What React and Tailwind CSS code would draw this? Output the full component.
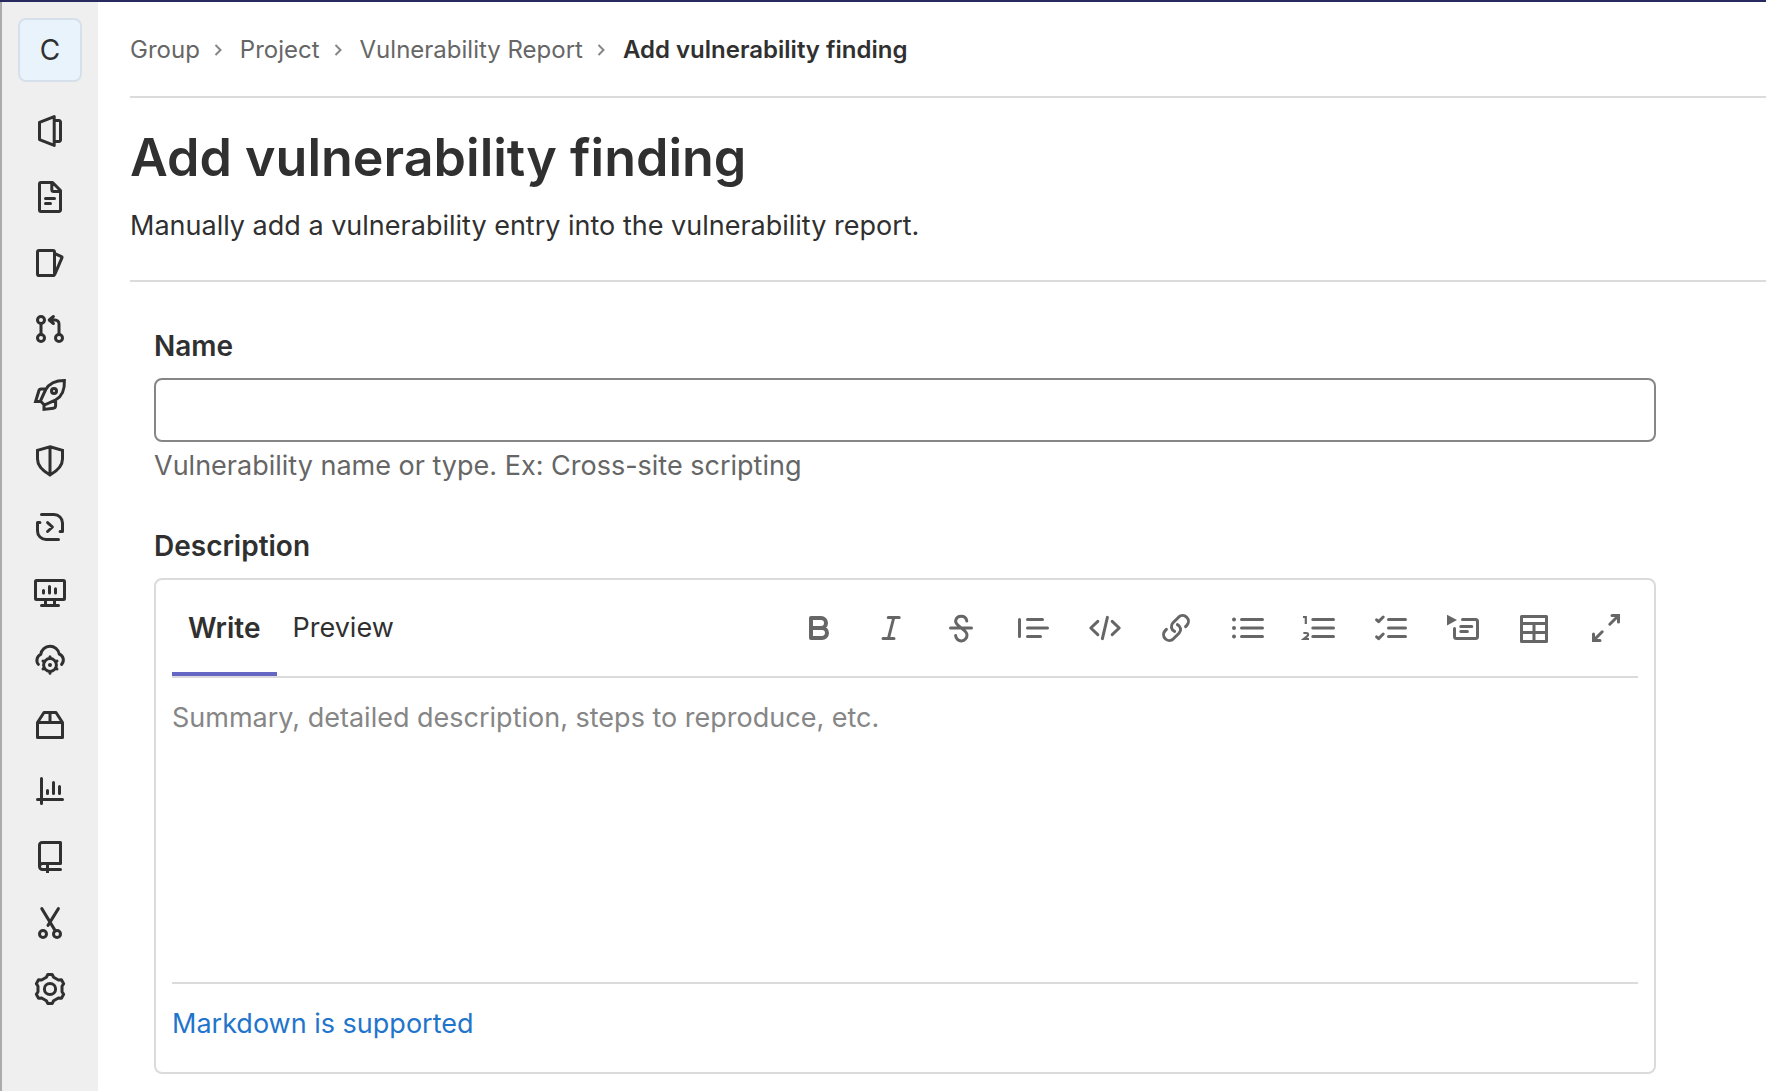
import React from "react";

function Icon({ children, viewBox = "0 0 16 16", strokeWidth = 1.5 }) {
  return (
    <svg
      viewBox={viewBox}
      className="size-8 shrink-0 overflow-visible"
      fill="none"
      stroke="currentColor"
      strokeWidth={strokeWidth}
      strokeLinecap="round"
      strokeLinejoin="round"
      aria-hidden="true"
    >
      {children}
    </svg>
  );
}

const navItems = [
  {
    label: "Project information",
    icon: (
      <Icon>
        <path d="M2.75 3.7 10.1.8v14.4l-7.35-2.9zM10.5 2.75h2a.75.75 0 0 1 .75.75v9a.75.75 0 0 1-.75.75h-2" />
      </Icon>
    ),
  },
  {
    label: "Repository",
    icon: (
      <Icon>
        <path d="M2.75 1.5a.75.75 0 0 1 .75-.75h5.8l3.95 4v9.75a.75.75 0 0 1-.75.75h-9a.75.75 0 0 1-.75-.75zM8.9 1v3.25a1 1 0 0 0 1 1h3.2M5.75 8.75h4.5M5.75 11.25h2.5" />
      </Icon>
    ),
  },
  {
    label: "Issues",
    icon: (
      <Icon>
        <rect x="1.75" y="1.75" width="8.5" height="12.5" rx=".8" />
        <path d="m10.5 3.3 3.2 1.5a.5.5 0 0 1 .25.65L10.5 13.4" />
      </Icon>
    ),
  },
  {
    label: "Merge requests",
    icon: (
      <Icon>
        <circle cx="3.5" cy="3.5" r="1.75" />
        <circle cx="3.5" cy="12.5" r="1.75" />
        <circle cx="12.5" cy="12.5" r="1.75" />
        <path d="M3.5 5.25v5.5M12.5 10.75V5.5a2 2 0 0 0-2-2H8.2M9.7 1.75 7.6 3.5l2.1 1.75" />
      </Icon>
    ),
  },
  {
    label: "CI/CD",
    icon: (
      <Icon>
        <path
          strokeLinejoin="miter"
          strokeLinecap="butt"
          d="M15.2.8C10.6.8 7.5 2.4 5.8 5.4L3.2 11l2 2 5.7-2.6c3-1.7 4.5-5 4.3-9.6zM6 5H3.6a1.3 1.3 0 0 0-1.2 1L.8 11.3h2.6M5 12.7v2.5l4.7-.6a1.3 1.3 0 0 0 1.1-1.1v-3"
        />
        <circle cx="10" cy="6" r="1.25" />
      </Icon>
    ),
  },
  {
    label: "Security & Compliance",
    icon: (
      <Icon>
        <path
          strokeLinejoin="miter"
          d="M8 .85 14.25 2.7V7c0 3.3-2.7 6-6.25 8C4.45 13 1.75 10.3 1.75 7V2.7zM8 1v14"
        />
      </Icon>
    ),
  },
  {
    label: "Deployments",
    icon: (
      <Icon>
        <path d="M3.75 1.75H10A4.25 4.25 0 0 1 14.25 6v4.25h-1.2M12.25 14.25H6A4.25 4.25 0 0 1 1.75 10V5.75h1.2M6.8 5.8 9.2 8l-2.4 2.25" />
      </Icon>
    ),
  },
  {
    label: "Monitor",
    icon: (
      <Icon>
        <rect x=".75" y="1.75" width="14.5" height="9.5" rx=".5" />
        <path d="M5.75 11.5V14M10.25 11.5V14M3.75 14.2h8.5M4.75 6.8V8M7.75 4.8V8M10.75 5.9V8" />
      </Icon>
    ),
  },
  {
    label: "Infrastructure",
    icon: (
      <Icon>
        <path d="M2.2 10.7a3.2 3.2 0 0 1 1.2-5 4.65 4.65 0 0 1 9.2-.2 3.2 3.2 0 0 1 1.2 5.2" />
        <circle cx="8" cy="11" r="3.2" />
        <path d="M8 7.8v-.9M8 15.1v-.9M10.8 9.4l.7-.4M4.5 13l.7-.4M10.8 12.6l.7.4M4.5 9l.7.4" />
        <circle cx="8" cy="11" r="1" fill="currentColor" stroke="none" />
      </Icon>
    ),
  },
  {
    label: "Packages and registries",
    icon: (
      <Icon>
        <path d="M1.75 6.75h12.5v7.5H1.75zM1.75 6.75l3.25-5h6l3.25 5M8 1.75v5" />
      </Icon>
    ),
  },
  {
    label: "Analytics",
    icon: (
      <Icon>
        <path d="M3.75 1.75v12.5M1.75 12.25h12.5M6.75 7.75v1.5M9.75 3.75v5.5M12.75 5.75v3.5" />
      </Icon>
    ),
  },
  {
    label: "Wiki",
    icon: (
      <Icon>
        <path d="M13.25 11.25V.75H4A1.25 1.25 0 0 0 2.75 2v10.5M13.25 11.25h-9a1.5 1.5 0 0 0 0 3h9" />
        <path strokeLinecap="butt" d="M6.75 11.5V16" />
      </Icon>
    ),
  },
  {
    label: "Snippets",
    icon: (
      <Icon>
        <circle cx="4.5" cy="13.5" r="1.75" />
        <circle cx="11.5" cy="13.5" r="1.75" />
        <path d="m3.9.8 6.7 11M12.2.8 7 9.2" />
      </Icon>
    ),
  },
  {
    label: "Settings",
    icon: (
      <Icon>
        <path d="M6.2 2.1 6.9.75h2.2l.7 1.35 2.41 1.39 1.52-.07 1.1 1.9-.82 1.29v2.78l.82 1.29-1.1 1.9-1.52-.07-2.41 1.39-.7 1.35H6.9l-.7-1.35-2.41-1.39-1.52.07-1.1-1.9.82-1.29V6.61l-.82-1.29 1.1-1.9 1.52.07z" />
        <circle cx="8" cy="8" r="2.8" />
      </Icon>
    ),
  },
];

const tools = [
  {
    label: "Bold",
    icon: (
      <Icon strokeWidth={2}>
        <path d="M4.5 3h5a2.5 2.5 0 0 1 0 5h-5zM4.5 8H10a2.5 2.5 0 0 1 0 5H4.5z" />
      </Icon>
    ),
  },
  {
    label: "Italic",
    icon: (
      <Icon>
        <path d="M7.1 2.75h5.5M4.5 13.25H10M9.9 2.75l-2.7 10.5" />
      </Icon>
    ),
  },
  {
    label: "Strikethrough",
    icon: (
      <Icon>
        <path d="M2.75 8h10.5M10.9 4.5a2.85 2.85 0 0 0-5.6 0c0 3 5.7 4 5.7 7a2.85 2.85 0 0 1-5.7.2" />
      </Icon>
    ),
  },
  {
    label: "Insert a quote",
    icon: (
      <Icon>
        <path d="M1.25 3.75v8.5M5.25 3.75h7.5M5.25 8h10M5.25 12.25h6.5" />
      </Icon>
    ),
  },
  {
    label: "Insert code",
    icon: (
      <Icon>
        <path d="M4.4 4.7.9 8l3.5 3.3M11.6 4.7l3.5 3.3-3.5 3.3M9.2 2.7 6.7 13.3" />
      </Icon>
    ),
  },
  {
    label: "Add a link",
    icon: (
      <Icon>
        <path d="M7.3 9.7C5.5 8.8 5.2 6.7 6.5 5.4L9.3 2.6a2.9 2.9 0 0 1 4.1 4.1l-.6.6M8.7 6.3c1.8.9 2.1 3 .8 4.3l-2.8 2.8a2.9 2.9 0 0 1-4.1-4.1l.6-.6" />
      </Icon>
    ),
  },
  {
    label: "Add a bullet list",
    icon: (
      <Icon>
        <path d="M4.75 3.75h10.5M4.75 8h10.5M4.75 12.25h10.5" />
        <g fill="currentColor" stroke="none">
          <circle cx="1" cy="3.75" r="1" />
          <circle cx="1" cy="8" r="1" />
          <circle cx="1" cy="12.25" r="1" />
        </g>
      </Icon>
    ),
  },
  {
    label: "Add a numbered list",
    icon: (
      <Icon>
        <path d="M4.9 3.75h10.35M4.9 8h10.35M4.9 12.25h10.35" />
        <path
          strokeWidth={1.1}
          strokeLinecap="butt"
          strokeLinejoin="miter"
          d="M0 2.5h1.4V6M.2 10.5h1.5c1.1 0 1.1 1.2.3 1.7L.4 13.5H3"
        />
      </Icon>
    ),
  },
  {
    label: "Add a checklist",
    icon: (
      <Icon>
        <path d="M6.75 3.75h8.5M6.75 8h8.5M6.75 12.25h8.5M.8 3.9l1 .9 2.3-2.3M.8 12.4l1 .9 2.3-2.3" />
      </Icon>
    ),
  },
  {
    label: "Add a collapsible section",
    icon: (
      <Icon>
        <path d="M0 1.4v5.3L5 4z" fill="currentColor" stroke="none" />
        <path d="M7.75 3.75h6.5a1 1 0 0 1 1 1v7.5a1 1 0 0 1-1 1h-9.5a1 1 0 0 1-1-1V8.2M6.9 7.25h5.5M6.9 9.75h3.3" />
      </Icon>
    ),
  },
  {
    label: "Add a table",
    icon: (
      <Icon>
        <path d="M1.75 2.25h12.5v12.5H1.75zM1.75 5.75h12.5M1.75 10.25h12.5M8 5.75v9" />
      </Icon>
    ),
  },
  {
    label: "Go full screen",
    icon: (
      <Icon>
        <path
          strokeLinejoin="miter"
          d="M11 1.75h3.25V5M13.9 2.1l-4 4M5 14.25H1.75V11M2.1 13.9l4-4"
        />
      </Icon>
    ),
  },
];

const crumbs = ["Group", "Project", "Vulnerability Report"];

function Sidebar() {
  return (
    <nav
      aria-label="Project navigation"
      className="flex w-[98px] shrink-0 flex-col items-center border-l-2 border-[#ababab] bg-[#efefef] pt-4"
    >
      <a
        href="#project"
        className="flex size-16 items-center justify-center rounded-lg border-2 border-[#d6e0ea] bg-[#e9f3fc] text-[28px]"
      >
        C
      </a>
      <ul className="mt-4 flex flex-col">
        {navItems.map((item) => (
          <li key={item.label}>
            <a
              href="#nav"
              aria-label={item.label}
              className="flex h-[66px] w-16 items-center justify-center"
            >
              {item.icon}
            </a>
          </li>
        ))}
      </ul>
    </nav>
  );
}

function Breadcrumbs() {
  return (
    <nav
      aria-label="Breadcrumb"
      className="flex h-24 items-center border-b-2 border-[#dbdbdb] pt-[2px] text-[24px] text-[#666]"
    >
      <ol className="flex items-center">
        {crumbs.map((crumb) => (
          <li key={crumb} className="flex items-center">
            <a href="#crumb">{crumb}</a>
            <svg
              viewBox="0 0 8 12"
              className="mr-[18px] ml-[14px] h-3 w-2"
              fill="none"
              stroke="#868686"
              strokeWidth="2"
              aria-hidden="true"
            >
              <path d="m1.5 1 5 5-5 5" />
            </svg>
          </li>
        ))}
        <li className="font-semibold text-[#303030]" aria-current="page">
          Add vulnerability finding
        </li>
      </ol>
    </nav>
  );
}

function Editor() {
  return (
    <div className="mt-3 rounded-lg border-2 border-[#dbdbdb] px-4">
      <div className="flex h-[98px] items-stretch justify-between border-b-2 border-[#dbdbdb]">
        <div role="tablist" className="flex">
          <button
            type="button"
            role="tab"
            aria-selected="true"
            className="border-b-4 border-[#6666c4] px-4 pt-1 text-[28px] font-semibold"
          >
            Write
          </button>
          <button
            type="button"
            role="tab"
            aria-selected="false"
            className="border-b-4 border-transparent px-4 pt-1"
          >
            Preview
          </button>
        </div>
        <div className="mr-4 flex w-[820px] items-center justify-between text-[#666]">
          {tools.map((tool) => (
            <button key={tool.label} type="button" aria-label={tool.label}>
              {tool.icon}
            </button>
          ))}
        </div>
      </div>
      <textarea
        id="description"
        placeholder="Summary, detailed description, steps to reproduce, etc."
        className="block h-[304px] w-full resize-none pt-5 leading-10 outline-none placeholder:text-[#868686]"
      />
      <div className="flex h-[90px] items-center border-t-2 border-[#dbdbdb] pb-2">
        <a href="#markdown" className="text-[#1f75cb]">
          Markdown is supported
        </a>
      </div>
    </div>
  );
}

export default function App() {
  return (
    <div className="flex min-h-screen flex-col border-t-2 border-[#292961] bg-white font-['Inter',sans-serif] text-[27px] leading-10 text-[#303030]">
      <div className="flex flex-1">
        <Sidebar />
        <main className="min-w-0 flex-1 pl-8">
          <Breadcrumbs />
          <header className="border-b-2 border-[#dbdbdb] pt-6 pb-[34px]">
            <h1 className="text-[52px] leading-[72px] font-semibold">Add vulnerability finding</h1>
            <p className="mt-3">Manually add a vulnerability entry into the vulnerability report.</p>
          </header>
          <form className="mr-[110px] ml-6 pt-11">
            <label htmlFor="name" className="block text-[28px] leading-10 font-semibold">
              Name
            </label>
            <input
              id="name"
              type="text"
              className="mt-3 block h-16 w-full rounded-lg border-2 border-[#868686] px-4 outline-none"
            />
            <p className="mt-1 text-[#666]">Vulnerability name or type. Ex: Cross-site scripting</p>
            <label
              htmlFor="description"
              className="mt-10 block text-[28px] leading-10 font-semibold"
            >
              Description
            </label>
            <Editor />
          </form>
        </main>
      </div>
    </div>
  );
}
